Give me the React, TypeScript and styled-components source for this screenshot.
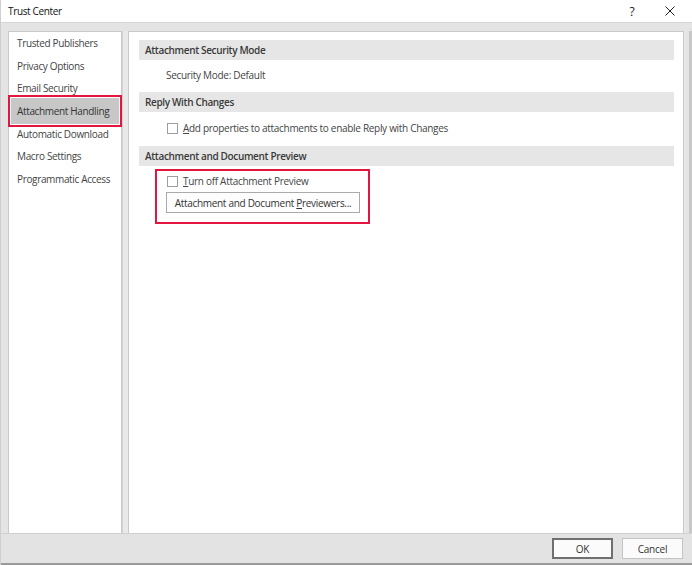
import React from "react";
import styled, { createGlobalStyle } from "styled-components";

const GlobalStyle = createGlobalStyle`
  html, body {
    margin: 0;
    padding: 0;
    background: #ffffff;
  }
  body {
    font-family: "Open Sans", "Noto Sans", sans-serif;
    color: #222;
  }
`;

const Window = styled.div`
  width: 692px;
  height: 565px;
  display: flex;
  flex-direction: column;
  background: #e4e4e4;
  box-sizing: border-box;
  border-left: 1px solid #cfcfcf;
  overflow: hidden;
`;

const TitleBar = styled.div`
  height: 22px;
  flex: none;
  display: flex;
  align-items: center;
  background: #ffffff;
  padding: 0 0 0 7px;
`;

const Title = styled.span`
  font-size: 10px;
  letter-spacing: -0.35px;
  color: #111;
  flex: 1;
`;

const TitleButton = styled.div<{ $w: number }>`
  width: ${(p) => p.$w}px;
  height: 22px;
  display: flex;
  align-items: center;
  justify-content: center;
  font-size: 12px;
  color: #222;
`;

const Main = styled.div`
  flex: 1;
  display: flex;
  padding: 8px 0 0 7px;
  border-top: 1px solid #d6d6d6;
  min-height: 0;
`;

const LeftPanel = styled.div`
  width: 114px;
  flex: none;
  background: #ffffff;
  border: 1px solid #c9c9c9;
  border-bottom: none;
  box-sizing: border-box;
  display: flex;
  flex-direction: column;
`;

const Splitter = styled.div`
  width: 6px;
  flex: none;
  background: #e9e9e9;
  border-left: 1px solid #d3d3d3;
  box-sizing: border-box;
`;

const RightPanel = styled.div`
  width: 556px;
  flex: none;
  background: #ffffff;
  border: 1px solid #c9c9c9;
  border-bottom: none;
  box-sizing: border-box;
  padding: 8px 9px 0 10px;
  display: flex;
  flex-direction: column;
`;

const RightFrame = styled.div`
  flex: 1;
  border-left: 2px solid #e8e8e8;
  border-right: 3px solid #c8c8c8;
`;

const NavItem = styled.div<{ $selected?: boolean }>`
  height: ${(p) => (p.$selected ? "25.6px" : "22.6px")};
  margin: ${(p) => (p.$selected ? "-1.5px 2px" : "0 1px")};
  display: flex;
  align-items: center;
  padding-left: ${(p) => (p.$selected ? "6px" : "7px")};
  font-size: 10px;
  letter-spacing: -0.35px;
  color: ${(p) => (p.$selected ? "#333" : "#444")};
  white-space: nowrap;
  background: ${(p) => (p.$selected ? "#c7c7c7" : "transparent")};
  outline: ${(p) => (p.$selected ? "2px solid #e2163f" : "none")};
  outline-offset: ${(p) => (p.$selected ? "1px" : "0")};
`;

const SectionHeader = styled.div<{ $top: number }>`
  height: 20px;
  margin-top: ${(p) => p.$top}px;
  display: flex;
  align-items: center;
  padding-left: 6px;
  background: #e6e6e6;
  font-size: 10px;
  font-weight: 600;
  letter-spacing: -0.35px;
  color: #3a3a3a;
`;

const Row = styled.div<{ $top: number; $indent: number }>`
  margin-top: ${(p) => p.$top}px;
  padding-left: ${(p) => p.$indent}px;
  height: 14px;
  display: flex;
  align-items: center;
  gap: 5px;
  font-size: 10px;
  letter-spacing: -0.3px;
  color: #444;
  white-space: nowrap;
`;

const CheckBox = styled.span`
  width: 9px;
  height: 9px;
  border: 1px solid #9d9d9d;
  background: #fff;
  flex: none;
`;

const Mnemonic = styled.span`
  text-decoration: underline;
`;

const Highlight = styled.div`
  margin: 3px 0 0 16px;
  width: 215px;
  height: 55px;
  box-sizing: border-box;
  border: 2px solid #e2163f;
  padding: 3px 0 0 9px;
  display: flex;
  flex-direction: column;
`;

const PlainButton = styled.div`
  margin-top: 4px;
  width: 194px;
  height: 21px;
  box-sizing: border-box;
  border: 1px solid #aaaaaa;
  background: #fdfdfd;
  display: flex;
  align-items: center;
  justify-content: center;
  font-size: 10px;
  letter-spacing: -0.3px;
  color: #333;
`;

const Footer = styled.div`
  height: 32px;
  flex: none;
  display: flex;
  align-items: flex-start;
  justify-content: flex-end;
  gap: 9px;
  padding: 4px 9px 0 0;
  box-sizing: border-box;
  background: #e3e3e3;
  border-top: 1px solid #d0d0d0;
  border-bottom: 2px solid #9a9a9a;
`;

const DialogButton = styled.div<{ $default?: boolean }>`
  width: 61px;
  height: 21px;
  box-sizing: border-box;
  border: ${(p) => (p.$default ? "2px solid #6f6f6f" : "1px solid #c4c4c4")};
  background: #fbfbfb;
  display: flex;
  align-items: center;
  justify-content: center;
  font-size: 10px;
  letter-spacing: -0.2px;
  color: #333;
`;

const navItems = [
  "Trusted Publishers",
  "Privacy Options",
  "Email Security",
  "Attachment Handling",
  "Automatic Download",
  "Macro Settings",
  "Programmatic Access",
];

const CloseIcon = () => (
  <svg width="10" height="10" viewBox="0 0 10 10">
    <path d="M0.5 0.5 L9.5 9.5 M9.5 0.5 L0.5 9.5" stroke="#222" strokeWidth="1" />
  </svg>
);

export default function App() {
  return (
    <>
      <GlobalStyle />
      <Window>
        <TitleBar>
          <Title>Trust Center</Title>
          <TitleButton $w={22}>?</TitleButton>
          <TitleButton $w={5} />
          <TitleButton $w={44}>
            <CloseIcon />
          </TitleButton>
        </TitleBar>
        <Main>
          <LeftPanel>
            {navItems.map((item) => (
              <NavItem key={item} $selected={item === "Attachment Handling"}>
                {item}
              </NavItem>
            ))}
          </LeftPanel>
          <Splitter />
          <RightPanel>
            <SectionHeader $top={0}>Attachment Security Mode</SectionHeader>
            <Row $top={8} $indent={27}>
              Security Mode: Default
            </Row>
            <SectionHeader $top={10}>Reply With Changes</SectionHeader>
            <Row $top={9} $indent={28}>
              <CheckBox />
              <span>
                <Mnemonic>A</Mnemonic>dd properties to attachments to enable Reply with Changes
              </span>
            </Row>
            <SectionHeader $top={11}>Attachment and Document Preview</SectionHeader>
            <Highlight>
              <Row $top={0} $indent={1}>
                <CheckBox />
                <span>
                  <Mnemonic>T</Mnemonic>urn off Attachment Preview
                </span>
              </Row>
              <PlainButton>
                Attachment and Document&nbsp;<Mnemonic>P</Mnemonic>reviewers...
              </PlainButton>
            </Highlight>
          </RightPanel>
          <RightFrame />
        </Main>
        <Footer>
          <DialogButton $default>OK</DialogButton>
          <DialogButton>Cancel</DialogButton>
        </Footer>
      </Window>
    </>
  );
}
